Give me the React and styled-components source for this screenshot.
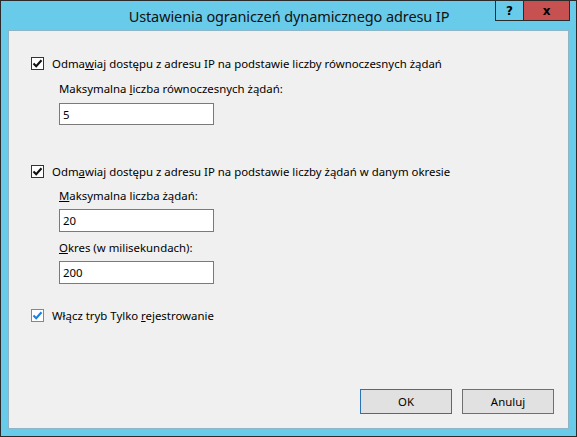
import React from "react";
import styled, { createGlobalStyle } from "styled-components";

const Global = createGlobalStyle`
  html, body { margin: 0; padding: 0; background: #6acbea; }
  body { font-family: "Noto Sans", "Open Sans", sans-serif; }
  * { box-sizing: border-box; }
`;

const Window = styled.div`
  width: 577px;
  height: 437px;
  border: 1px solid #2b2b2b;
  background: #69cbea;
  display: flex;
  flex-direction: column;
  padding: 0 7px 7px 7px;
`;

const TitleBar = styled.div`
  height: 29px;
  display: grid;
  grid-template-columns: 1fr auto 1fr;
  margin: 0 -7px;
  padding: 0 6px 0 7px;
`;

const Title = styled.div`
  grid-column: 2;
  font-family: "Noto Sans", sans-serif;
  font-size: 14.5px;
  color: #111;
  line-height: 29px;
  padding-top: 1px;
  letter-spacing: -0.1px;
`;

const Caption = styled.div`
  grid-column: 3;
  justify-self: end;
  align-self: start;
  display: flex;
  margin-top: -1px;
`;

const CapButton = styled.div`
  width: ${(p) => p.$w}px;
  height: 21px;
  background: ${(p) => p.$bg};
  border: 1px solid #2b2b2b;
  margin-left: ${(p) => (p.$joined ? "-1px" : "0")};
  display: flex;
  align-items: center;
  justify-content: center;
  font-family: "DejaVu Sans", sans-serif;
  font-weight: bold;
  font-size: 12px;
  color: #000;
`;

const Content = styled.div`
  flex: 1;
  background: #f0f0f0;
  border: 1px solid #8fb4c6;
  display: flex;
  flex-direction: column;
  padding: 24px 14px 14px 22px;
  font-size: 11.4px;
  color: #000;
`;

const CheckRow = styled.div`
  display: flex;
  align-items: center;
  gap: 8px;
  height: 16px;
  margin-top: ${(p) => p.$mt || 0}px;
  white-space: nowrap;
`;

const Box = styled.div`
  width: 13px;
  height: 13px;
  border: 1px solid ${(p) => (p.$focus ? "#3399ff" : "#333")};
  background: #fff;
  display: flex;
  align-items: center;
  justify-content: center;
  flex: none;
`;

const Sub = styled.div`
  display: flex;
  flex-direction: column;
  padding-left: 28px;
`;

const FieldLabel = styled.div`
  height: 16px;
  line-height: 16px;
  margin-top: ${(p) => p.$mt}px;
  white-space: nowrap;
`;

const TextBox = styled.div`
  width: 155px;
  height: ${(p) => p.$h || 22}px;
  margin-top: ${(p) => p.$mt}px;
  border: 1px solid #7a7a7a;
  background: #fff;
  padding-left: 3px;
  display: flex;
  align-items: center;
`;

const Spacer = styled.div`
  flex: 1;
`;

const Footer = styled.div`
  display: flex;
  justify-content: flex-end;
  gap: 10px;
`;

const Button = styled.div`
  width: 92px;
  height: 25px;
  background: #e1e1e1;
  border: 1px solid ${(p) => (p.$default ? "#2a73b5" : "#707070")};
  display: flex;
  align-items: center;
  justify-content: center;
`;

const Check = ({ color }) => (
  <svg width="11" height="11" viewBox="0 0 11 11">
    <path d="M1.5 5.6 L4.2 8.3 L9.5 2.3" fill="none" stroke={color} strokeWidth="2.1" />
  </svg>
);

const CheckBox = ({ focus }) => (
  <Box $focus={focus}>
    <Check color={focus ? "#1f7fe0" : "#111"} />
  </Box>
);

export default function App() {
  return (
    <>
      <Global />
      <Window>
        <TitleBar>
          <Title>Ustawienia ograniczeń dynamicznego adresu IP</Title>
          <Caption>
            <CapButton $w={29} $bg="#69cbea">?</CapButton>
            <CapButton $w={47} $bg="#c75050" $joined>x</CapButton>
          </Caption>
        </TitleBar>
        <Content>
          <CheckRow>
            <CheckBox />
            <span>
              Odma<u>w</u>iaj dostępu z adresu IP na podstawie liczby równoczesnych żądań
            </span>
          </CheckRow>
          <Sub>
            <FieldLabel $mt={10}>
              Maksymalna <u>l</u>iczba równoczesnych żądań:
            </FieldLabel>
            <TextBox $mt={6}>5</TextBox>
          </Sub>
          <CheckRow $mt={38}>
            <CheckBox />
            <span>
              Odm<u>a</u>wiaj dostępu z adresu IP na podstawie liczby żądań w danym okresie
            </span>
          </CheckRow>
          <Sub>
            <FieldLabel $mt={9}>
              <u>M</u>aksymalna liczba żądań:
            </FieldLabel>
            <TextBox $mt={5} $h={23}>20</TextBox>
            <FieldLabel $mt={8}>
              <u>O</u>kres (w milisekundach):
            </FieldLabel>
            <TextBox $mt={5} $h={23}>200</TextBox>
          </Sub>
          <CheckRow $mt={23}>
            <CheckBox focus />
            <span>
              Włącz tryb Tylko <u>r</u>ejestrowanie
            </span>
          </CheckRow>
          <Spacer />
          <Footer>
            <Button $default>OK</Button>
            <Button>Anuluj</Button>
          </Footer>
        </Content>
      </Window>
    </>
  );
}
